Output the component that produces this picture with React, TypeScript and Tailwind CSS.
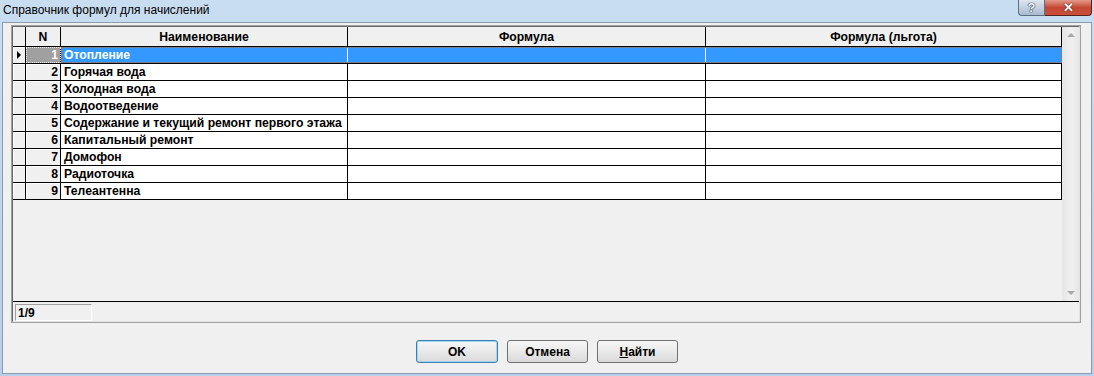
import React from 'react'

const rows = [
  'Отопление',
  'Горячая вода',
  'Холодная вода',
  'Водоотведение',
  'Содержание и текущий ремонт первого этажа',
  'Капитальный ремонт',
  'Домофон',
  'Радиоточка',
  'Телеантенна'
]

const font = { fontFamily: '"Liberation Sans", Arial, sans-serif' }

const Btn = ({ children, def }: { children: React.ReactNode; def?: boolean }) => (
  <button
    className={
      'h-[23px] rounded-[3px] border bg-gradient-to-b from-[#f6f6f6] via-[#e9e9e9] to-[#d9d9d9] text-[12px] font-bold text-black ' +
      (def ? 'w-[82px] border-[#3c7fb1] shadow-[inset_0_0_0_1px_#9fd4f2]' : 'w-[81px] border-[#707070]')
    }
  >
    {children}
  </button>
)

export default function App() {
  return (
    <div
      className="relative h-[376px] w-[1094px] overflow-hidden bg-gradient-to-b from-[#c9ddf1] to-[#b7cfe8] text-black"
      style={font}
    >
      {/* title bar */}
      <div className="flex h-[22px] items-start justify-between">
        <div className="pl-[3px] pt-[3px] text-[12px] leading-[14px] text-black">
          Справочник формул для начислений
        </div>
        <div className="mr-[2px] flex">
          <div className="flex h-[16px] w-[27px] items-center justify-center rounded-bl-[4px] border border-t-0 border-[#5d6f85] bg-gradient-to-b from-[#dde6f0] to-[#a9bbd0] text-[13px] font-bold leading-none text-white [text-shadow:0_0_1px_#1f2c3d,0_0_1px_#1f2c3d,0_0_1px_#1f2c3d]">
            ?
          </div>
          <div className="flex h-[16px] w-[47px] items-center justify-center rounded-br-[4px] border border-l-0 border-t-0 border-[#5a1f1f] bg-gradient-to-b from-[#e4998a] via-[#c44732] to-[#c9503c] text-[13px] font-bold leading-none text-white [text-shadow:0_0_1px_#3a0a0a,0_0_1px_#3a0a0a]">
            ✕
          </div>
        </div>
      </div>

      {/* client */}
      <div className="ml-[2px] h-[352px] w-[1090px] border border-[#8b9bb0] bg-[#f0f0f0] pl-[8px] pt-[2px]">
        <div className="w-[1070px] border border-[#a0a0a0]">
          <div className="border-b border-l border-r border-t border-[#696969] border-b-[#e3e3e3] border-r-[#e3e3e3]">
            <div className="flex h-[274px]">
              <div className="w-[1049px] text-[12.2px] font-bold leading-[14px]">
                {/* header */}
                <div className="flex h-[20px] border-b border-black bg-[#f0f0f0]">
                  <div className="w-[13px] border-r border-black" />
                  <div className="flex w-[35px] items-center justify-center border-r border-black">N</div>
                  <div className="flex w-[287px] items-center justify-center border-r border-black">Наименование</div>
                  <div className="flex w-[358px] items-center justify-center border-r border-black">Формула</div>
                  <div className="flex w-[356px] items-center justify-center border-r border-black">Формула (льгота)</div>
                </div>
                {rows.map((name, i) => {
                  const sel = i === 0
                  return (
                    <div key={name} className="flex h-[17px] border-b border-black">
                      <div className="relative w-[13px] border-r border-black bg-[#f0f0f0] shadow-[inset_1px_1px_0_#ffffff]">
                        {sel && (
                          <div className="absolute left-[4px] top-[4px] h-0 w-0 border-y-[4px] border-l-[4px] border-y-transparent border-l-black" />
                        )}
                      </div>
                      <div
                        className={
                          'flex w-[35px] items-center justify-end border-r border-black pr-[2px] ' +
                          (sel
                            ? 'bg-[#a0a0a0] text-white outline-1 -outline-offset-1 outline-dotted outline-[#f0f0f0]'
                            : 'bg-[#f0f0f0] shadow-[inset_1px_1px_0_#ffffff]')
                        }
                      >
                        {i + 1}
                      </div>
                      <div
                        className={
                          'flex ' +
                          (sel ? 'bg-[#3399ff] text-white outline-1 -outline-offset-1 outline-dotted outline-[#c0661e]' : 'bg-white')
                        }
                      >
                        <div className={'flex w-[287px] items-center border-r pl-[3px] ' + (sel ? 'border-white' : 'border-black')}>
                          {name}
                        </div>
                        <div className={'w-[358px] border-r ' + (sel ? 'border-white' : 'border-black')} />
                        <div className={'w-[356px] border-r ' + (sel ? 'border-transparent' : 'border-black')} />
                      </div>
                    </div>
                  )
                })}
              </div>
              {/* scrollbar */}
              <div className="flex w-[17px] flex-col justify-between border-l border-[#e8e8e8] bg-gradient-to-r from-[#e6e6e6] via-[#f0f0f0] to-[#e6e6e6] py-[6px]">
                <div className="mx-auto h-0 w-0 border-x-[4px] border-b-[4px] border-x-transparent border-b-[#a8a8a8]" />
                <div className="mx-auto h-0 w-0 border-x-[4px] border-t-[4px] border-x-transparent border-t-[#a8a8a8]" />
              </div>
            </div>
            <div className="h-[20px] border-t border-black pl-[2px] pt-[2px]">
              <div className="flex h-[17px] w-[77px] items-center border border-b-white border-l-[#a0a0a0] border-r-white border-t-[#a0a0a0] pl-[2px] text-[12px] font-bold">
                1/9
              </div>
            </div>
          </div>
        </div>

        {/* buttons */}
        <div className="mt-[17px] flex justify-center gap-[9px] pr-[8px]">
          <Btn def>OK</Btn>
          <Btn>Отмена</Btn>
          <Btn>
            <span className="underline">Н</span>айти
          </Btn>
        </div>
      </div>
    </div>
  )
}
